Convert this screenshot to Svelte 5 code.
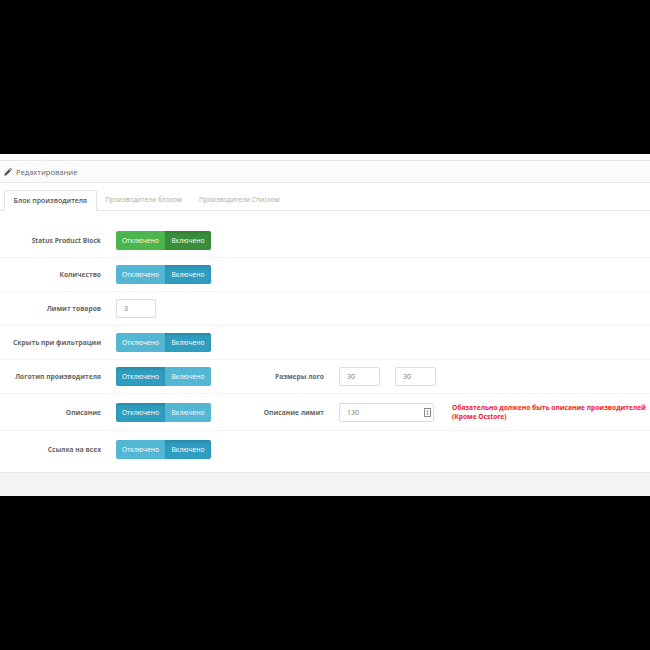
<script>
	const rows = [
		{ label: 'Status Product Block', kind: 'toggle', tone: 'green', on: 'right', h: 34 },
		{ label: 'Количество', kind: 'toggle', on: 'right', h: 34 },
		{ label: 'Лимит товаров', kind: 'input', value: '3', h: 34 },
		{ label: 'Скрыть при фильтрации', kind: 'toggle', on: 'right', h: 34 },
		{ label: 'Логотип производителя', kind: 'toggle', on: 'left', extra: 'sizes', h: 34 },
		{ label: 'Описание', kind: 'toggle', on: 'left', extra: 'limit', h: 37 },
		{ label: 'Ссылка на всех', kind: 'toggle', on: 'right', h: 37 }
	];
</script>

<div class="page">
	<div class="panel">
		<div class="heading">
			<svg class="pencil" width="8" height="8" viewBox="0 0 9 9"><path d="M0.3 8.7 L0.9 6.2 L5.9 1.2 L7.8 3.1 L2.8 8.1 Z M6.5 0.6 L7 0.2 Q7.3 0 7.6 0.2 L8.8 1.4 Q9 1.7 8.8 2 L8.4 2.5 Z" fill="#555" /></svg>
			<span>Редактирование</span>
		</div>
		<div class="body">
			<div class="tabs">
				<div class="tab active">Блок производителя</div>
				<div class="tab">Производители блоком</div>
				<div class="tab">Производители Списком</div>
			</div>
			<div class="form">
				{#each rows as r}
					<div class="row" style="height: {r.h}px">
						<div class="label">{r.label}</div>
						<div class="control">
							{#if r.kind === 'toggle'}
								<div class="toggle {r.tone || 'blue'}">
									<span class="btn first" class:pressed={r.on === 'left'}>Отключено</span>
									<span class="btn" class:pressed={r.on === 'right'}>Включено</span>
								</div>
							{:else}
								<div class="input small">{r.value}</div>
							{/if}
						</div>
						{#if r.extra === 'sizes'}
							<div class="label second">Размеры лого</div>
							<div class="input small">30</div>
							<div class="input small gap">30</div>
						{:else if r.extra === 'limit'}
							<div class="label second">Описание лимит</div>
							<div class="input wide">
								130
								<svg class="spin" width="7" height="9" viewBox="0 0 7 9"><rect x="0.5" y="0.5" width="6" height="8" fill="none" stroke="#888" /><path d="M3.5 2 L5 3.8 H2 Z M3.5 7 L5 5.2 H2 Z" fill="#888" /></svg>
							</div>
							<div class="note">Обязательно должено быть описание производителей (Кроме Ocstore)</div>
						{/if}
					</div>
				{/each}
			</div>
		</div>
	</div>
	<div class="footer"></div>
</div>

<style>
	:global(body) {
		margin: 0;
		background: #000;
	}
	.page {
		margin-top: 154px;
		height: 342px;
		background: #fff;
		font-family: "Open Sans", sans-serif;
		font-size: 7px;
		color: #666;
		display: flex;
		flex-direction: column;
		overflow: hidden;
	}
	.panel {
		margin-top: 6px;
		height: 313px;
		border-top: 1px solid #e8e8e8;
		border-bottom: 1px solid #e6e6e6;
		box-sizing: border-box;
	}
	.heading {
		height: 21px;
		background: #fbfbfb;
		border-bottom: 1px solid #e8e8e8;
		display: flex;
		align-items: center;
		padding-left: 4px;
		gap: 4px;
		font-size: 7.6px;
		color: #666;
	}
	.body {
		padding-top: 7px;
	}
	.tabs {
		display: flex;
		padding-left: 4px;
		height: 21px;
		box-sizing: border-box;
		border-bottom: 1px solid #e4e4e4;
	}
	.tab {
		padding: 0 8.5px;
		line-height: 20px;
		color: #aaa;
		font-size: 6.65px;
	}
	.tab.active {
		height: 21px;
		box-sizing: border-box;
		color: #555;
		font-size: 7px;
		font-weight: 600;
		background: #fff;
		border: 1px solid #e4e4e4;
		border-bottom: none;
		border-radius: 2px 2px 0 0;
	}
	.form {
		padding-top: 13px;
	}
	.row {
		display: flex;
		align-items: center;
		border-bottom: 1px solid #f3f3f3;
		box-sizing: border-box;
	}
	.row:last-child {
		border-bottom: none;
	}
	.label {
		flex: none;
		width: 101px;
		text-align: right;
		font-weight: 700;
		font-size: 6.7px;
		color: #666;
		white-space: nowrap;
	}
	.control {
		flex: none;
		margin-left: 15px;
		width: 95px;
	}
	.label.second {
		width: 113px;
	}
	.toggle {
		display: flex;
		width: 95px;
		height: 19px;
		border-radius: 2px;
		overflow: hidden;
		color: #fff;
	}
	.btn {
		flex: 1;
		text-align: center;
		line-height: 19px;
		font-size: 6.7px;
		background: #53b7d4;
	}
	.btn.first {
		flex: 0 0 49px;
	}
	.btn.pressed {
		background: #2f9dbf;
		box-shadow: inset 0 2px 3px rgba(0, 0, 0, 0.12);
	}
	.green .btn {
		background: #4cb64c;
	}
	.green .btn.pressed {
		background: #388e3c;
	}
	.input {
		flex: none;
		height: 19px;
		box-sizing: border-box;
		border: 1px solid #ddd;
		border-radius: 2px;
		padding-left: 7px;
		line-height: 17px;
		font-size: 7px;
		color: #777;
		background: #fff;
	}
	.small {
		width: 41px;
	}
	.control .small {
		width: 40px;
	}
	.second + .small {
		margin-left: 15px;
	}
	.gap {
		margin-left: 15px;
	}
	.wide {
		width: 95px;
		margin-left: 15px;
		display: flex;
		align-items: center;
		justify-content: space-between;
		padding-right: 2px;
	}
	.note {
		flex: none;
		margin-left: 18px;
		width: 199px;
		color: #f0222e;
		font-weight: 700;
		font-size: 6.65px;
		line-height: 9.5px;
	}
	.footer {
		flex: 1;
		background: #f4f4f4;
	}
</style>
